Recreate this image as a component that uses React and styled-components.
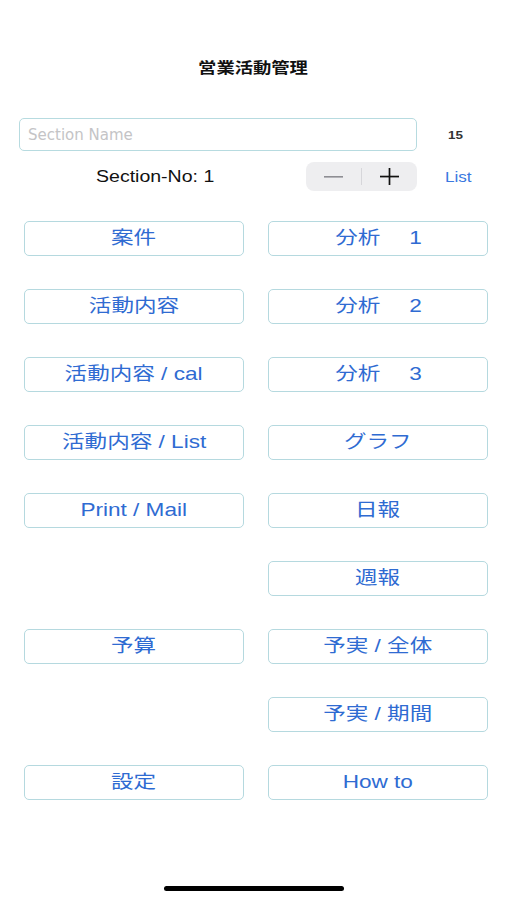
import React from "react";
import styled, { createGlobalStyle } from "styled-components";

const Global = createGlobalStyle`
  html, body { margin: 0; padding: 0; background: #fff; }
  body { font-family: "Liberation Sans", Arial, "Noto Sans CJK JP", sans-serif; }
  * { box-sizing: border-box; }
`;

const Screen = styled.div`
  width: 507px;
  height: 900px;
  background: #fff;
  display: flex;
  flex-direction: column;
  position: relative;
`;

/* the screenshot is horizontally stretched; text is widened to match */
const Wide = styled.span`
  display: inline-block;
  transform: scaleX(1.22);
  transform-origin: ${(p) => p.$origin || "center"};
  white-space: pre;
`;

const Title = styled.h1`
  margin: 57px 0 0;
  height: 20px;
  line-height: 20px;
  text-align: center;
  font-size: 15px;
  font-weight: 700;
  color: #111;
  font-family: "Noto Sans CJK JP", sans-serif;
`;

const FieldRow = styled.div`
  display: flex;
  align-items: center;
  margin-top: 41px;
  padding-left: 19px;
`;

const Field = styled.input`
  width: 398px;
  height: 33px;
  border: 1px solid #b7dbe0;
  border-radius: 5px;
  padding: 0 8px;
  font-size: 15px;
  font-family: "DejaVu Sans", sans-serif;
  color: #222;
  outline: none;
  &::placeholder { color: #c4c4c6; }
`;

const Count = styled.span`
  margin-left: 31px;
  font-size: 11px;
  font-weight: 700;
  color: #333;
`;

const StepRow = styled.div`
  display: flex;
  align-items: center;
  margin-top: 11px;
  height: 29px;
`;

const SectionNo = styled.span`
  margin-left: 96px;
  width: 210px;
  font-size: 16px;
  color: #111;
`;

const Stepper = styled.div`
  display: flex;
  align-items: center;
  width: 111px;
  height: 29px;
  background: #eeeef0;
  border-radius: 8px;
`;

const StepBtn = styled.div`
  flex: 1;
  display: flex;
  align-items: center;
  justify-content: center;
  height: 100%;
`;

const StepDivider = styled.div`
  width: 1px;
  height: 17px;
  background: #d6d6da;
`;

const ListLink = styled.span`
  margin-left: 28px;
  font-size: 14px;
  color: #3a78e0;
`;

const Grid = styled.div`
  display: grid;
  grid-template-columns: 220px 220px;
  grid-auto-rows: 35px;
  column-gap: 24px;
  row-gap: 33px;
  margin-top: 30px;
  padding-left: 24px;
`;

const Btn = styled.div`
  border: 1px solid #b5d9df;
  border-radius: 5px;
  display: flex;
  align-items: center;
  justify-content: center;
  font-size: 18.5px;
  line-height: 1;
  color: #2f6bd2;
  font-family: "Liberation Sans", Arial, "Noto Sans CJK JP", sans-serif;
  visibility: ${(p) => (p.$empty ? "hidden" : "visible")};
`;

const HomeBar = styled.div`
  position: absolute;
  left: 164px;
  top: 886px;
  width: 180px;
  height: 5px;
  border-radius: 3px;
  background: #000;
`;

const buttons = [
  "案件", "分析　 1",
  "活動内容", "分析　 2",
  "活動内容 / cal", "分析　 3",
  "活動内容 / List", "グラフ",
  "Print / Mail", "日報",
  null, "週報",
  "予算", "予実 / 全体",
  null, "予実 / 期間",
  "設定", "How to",
];

export default function App() {
  return (
    <Screen>
      <Global />
      <Title><Wide>営業活動管理</Wide></Title>
      <FieldRow>
        <Field placeholder="Section Name" />
        <Count><Wide $origin="left">15</Wide></Count>
      </FieldRow>
      <StepRow>
        <SectionNo><Wide $origin="left">Section-No: 1</Wide></SectionNo>
        <Stepper>
          <StepBtn>
            <svg width="19" height="2" viewBox="0 0 19 2"><rect width="19" height="1.6" fill="#8e8e93" /></svg>
          </StepBtn>
          <StepDivider />
          <StepBtn>
            <svg width="19" height="17" viewBox="0 0 19 17">
              <rect x="0" y="7.7" width="19" height="1.7" fill="#111" />
              <rect x="8.65" y="0" width="1.7" height="17" fill="#111" />
            </svg>
          </StepBtn>
        </Stepper>
        <ListLink><Wide $origin="left">List</Wide></ListLink>
      </StepRow>
      <Grid>
        {buttons.map((b, i) => (
          <Btn key={i} $empty={!b}>{b ? <Wide>{b}</Wide> : null}</Btn>
        ))}
      </Grid>
      <HomeBar />
    </Screen>
  );
}
